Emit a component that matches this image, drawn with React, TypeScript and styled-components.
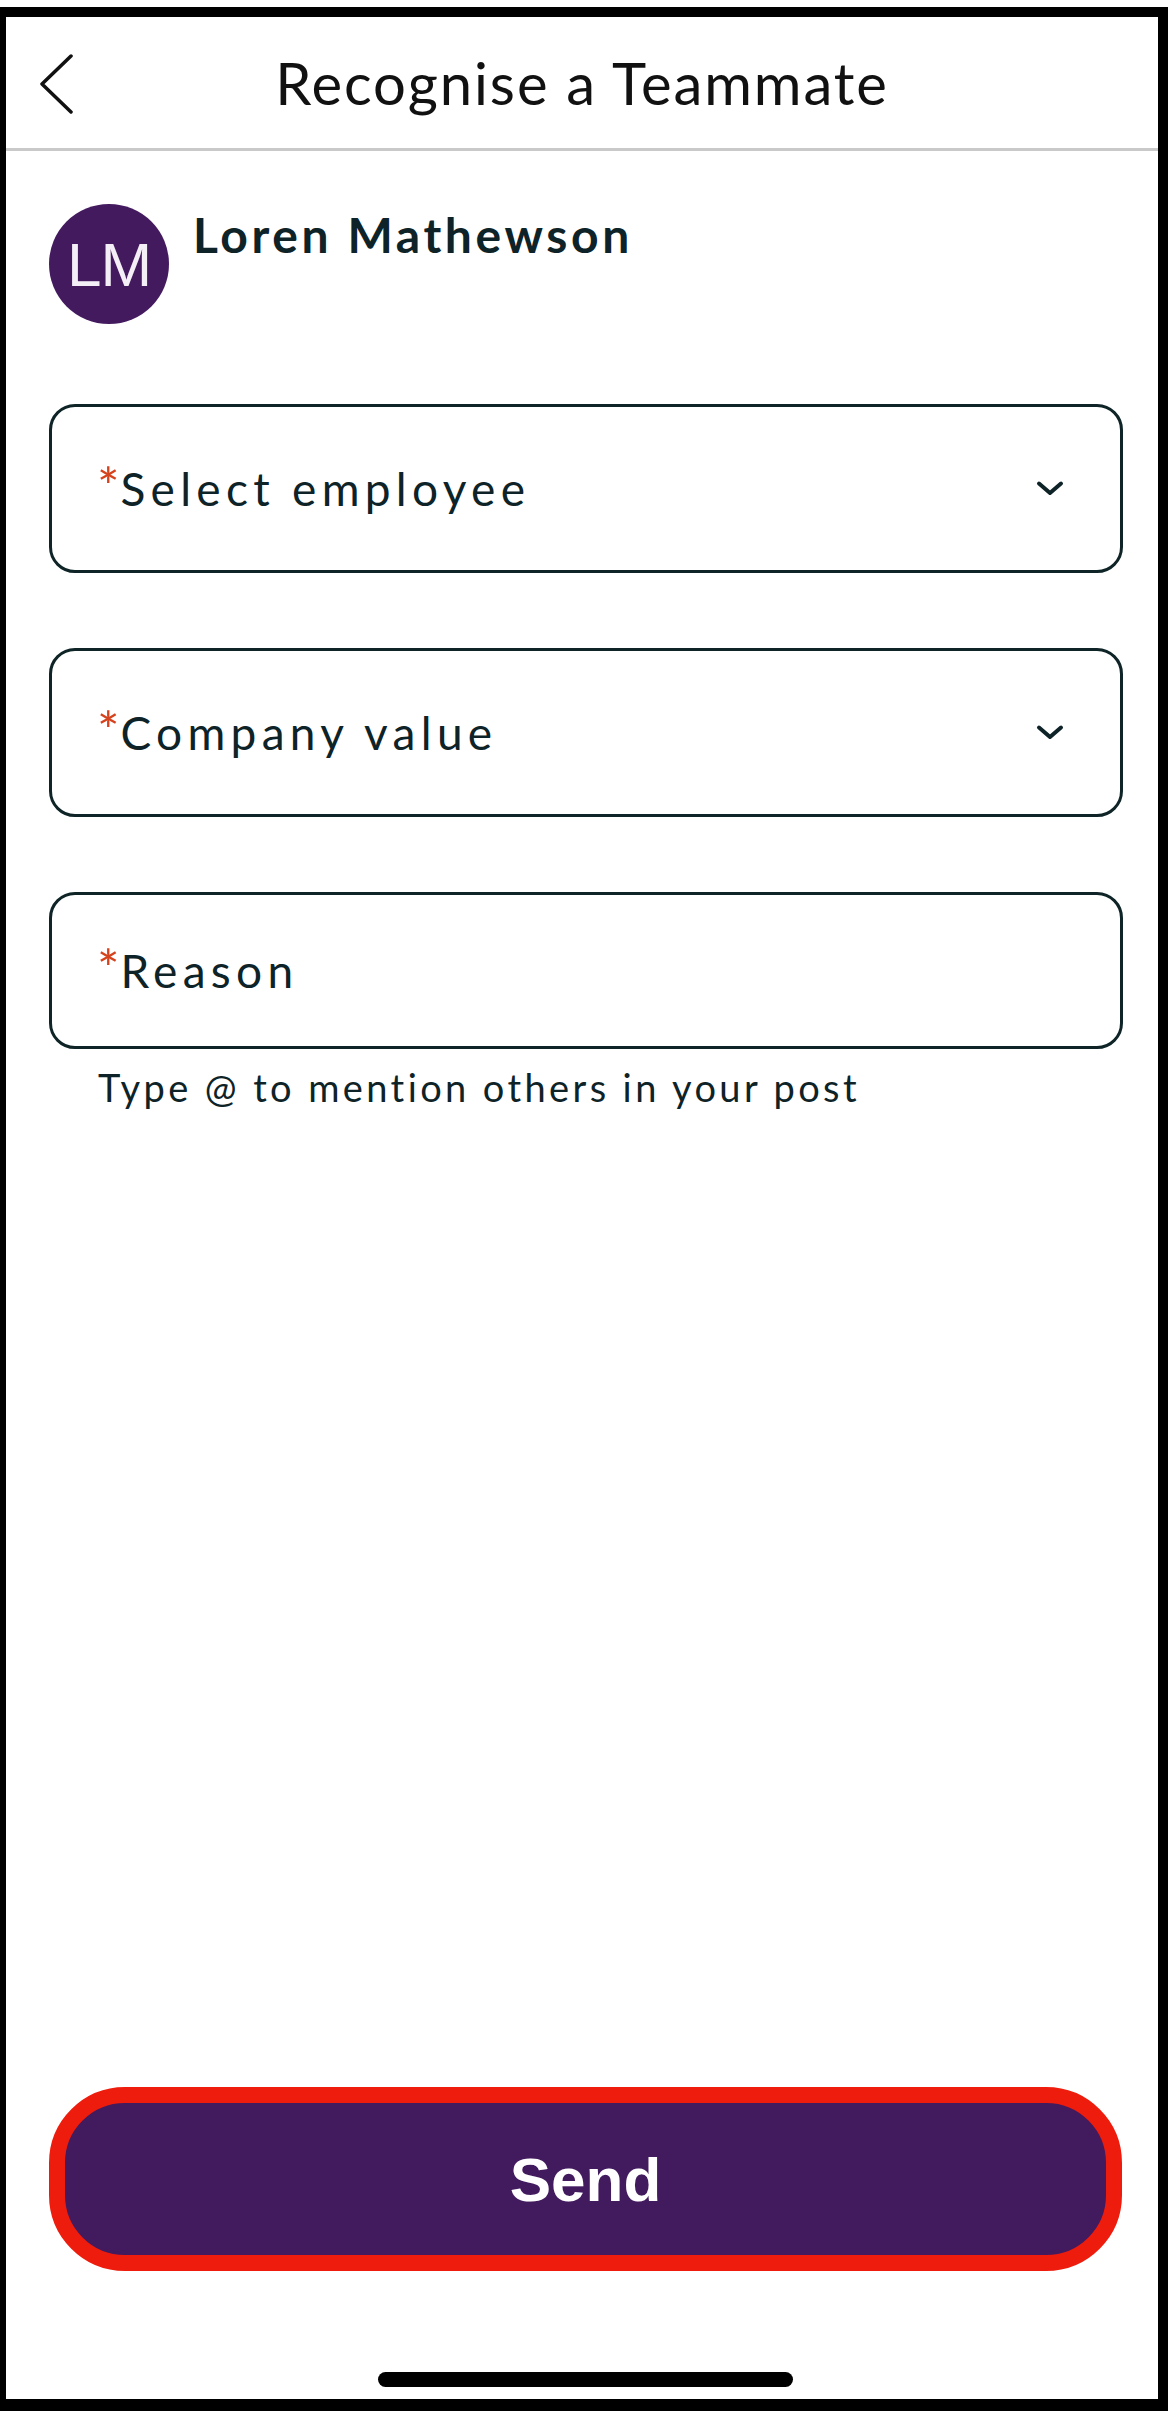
import React from "react";
import styled, { createGlobalStyle } from "styled-components";

const Global = createGlobalStyle`
  html, body { margin: 0; padding: 0; background: #ffffff; }
  * { box-sizing: border-box; }
`;

const Page = styled.div`
  width: 1170px;
  height: 2411px;
  padding-top: 7px;
  background: #ffffff;
`;

const Frame = styled.div`
  width: 1168px;
  height: 2404px;
  border-style: solid;
  border-color: #000000;
  border-width: 10px 10px 12px 6px;
  background: #ffffff;
  display: flex;
  flex-direction: column;
  font-family: Lato, "Noto Sans", sans-serif;
  color: #0e2327;
`;

const Header = styled.header`
  height: 134px;
  flex-shrink: 0;
  border-bottom: 3px solid #c9c9c9;
  display: grid;
  grid-template-columns: 1fr auto 1fr;
  align-items: center;
`;

const BackButton = styled.button`
  justify-self: start;
  margin-left: 30px;
  margin-top: 2px;
  padding: 0;
  border: none;
  background: none;
  display: flex;
`;

const Title = styled.h1`
  margin: 0;
  font-family: Lato, sans-serif;
  font-weight: 400;
  font-size: 58px;
  line-height: 1.2;
  color: #111111;
  letter-spacing: 1.9px;
`;

const Content = styled.main`
  display: flex;
  flex-direction: column;
  padding: 53px 35px 0 43px;
`;

const ProfileRow = styled.div`
  display: flex;
  align-items: flex-start;
  gap: 24px;
`;

const Avatar = styled.div`
  width: 120px;
  height: 120px;
  border-radius: 50%;
  background: #441a5f;
  color: #f4eef6;
  display: flex;
  align-items: center;
  justify-content: center;
  font-family: "Liberation Sans", Arial, sans-serif;
  font-size: 62px;
  font-weight: 400;
  letter-spacing: -1px;
  flex-shrink: 0;
`;

const Name = styled.div`
  font-size: 48px;
  font-weight: 700;
  line-height: 1.2;
  letter-spacing: 3.6px;
  color: #0e2327;
  margin-top: 2px;
`;

const Fields = styled.div`
  margin-top: 80px;
  display: flex;
  flex-direction: column;
  gap: 75px;
`;

const Field = styled.div<{ $height: number }>`
  height: ${(p) => p.$height}px;
  border: 3px solid #0f2427;
  border-radius: 26px;
  display: flex;
  align-items: center;
  justify-content: space-between;
  padding: 0 55px 0 45px;
`;

const Label = styled.span`
  font-size: 46px;
  letter-spacing: 5.3px;
  line-height: 1.2;
  color: #0e2327;
`;

const Required = styled.span`
  color: #d4431d;
  font-size: 1.15em;
  letter-spacing: 1px;
  line-height: 1;
`;

const Helper = styled.p`
  margin: 16px 0 0 49px;
  font-size: 38px;
  line-height: 1.2;
  letter-spacing: 3.4px;
  color: #0e2327;
`;

const Footer = styled.footer`
  margin-top: auto;
  display: flex;
  flex-direction: column;
  padding-bottom: 12px;
`;

const SendButton = styled.button`
  margin: 0 36px 0 43px;
  height: 184px;
  border: 16px solid #ee1c0c;
  border-radius: 76px;
  background: #421a5e;
  color: #ffffff;
  font-family: "Liberation Sans", Arial, sans-serif;
  font-weight: 700;
  font-size: 62px;
  display: flex;
  align-items: center;
  justify-content: center;
`;

const HomeBar = styled.div`
  margin-top: 101px;
  display: flex;
  justify-content: center;
  padding-left: 7px;
`;

const HomeIndicator = styled.div`
  width: 415px;
  height: 15px;
  border-radius: 8px;
  background: #000000;
`;

const ChevronDown = () => (
  <svg width="30" height="17" viewBox="0 0 30 17">
    <polyline
      points="4,3.5 15,13 26,3.5"
      fill="none"
      stroke="#0e2327"
      strokeWidth="4"
      strokeLinecap="round"
      strokeLinejoin="round"
    />
  </svg>
);

const ChevronLeft = () => (
  <svg width="38" height="60" viewBox="0 0 38 60">
    <polyline
      points="35,2 6,30 35,58"
      fill="none"
      stroke="#111111"
      strokeWidth="3.5"
      strokeLinecap="round"
      strokeLinejoin="round"
    />
  </svg>
);

export default function App() {
  return (
    <Page>
      <Global />
      <Frame>
        <Header>
          <BackButton aria-label="Back">
            <ChevronLeft />
          </BackButton>
          <Title>Recognise a Teammate</Title>
          <span />
        </Header>
        <Content>
          <ProfileRow>
            <Avatar>LM</Avatar>
            <Name>Loren Mathewson</Name>
          </ProfileRow>
          <Fields>
            <Field $height={169}>
              <Label>
                <Required>*</Required>Select employee
              </Label>
              <ChevronDown />
            </Field>
            <Field $height={169}>
              <Label>
                <Required>*</Required>Company value
              </Label>
              <ChevronDown />
            </Field>
            <Field $height={157}>
              <Label>
                <Required>*</Required>Reason
              </Label>
            </Field>
          </Fields>
          <Helper>Type @ to mention others in your post</Helper>
        </Content>
        <Footer>
          <SendButton>Send</SendButton>
          <HomeBar>
            <HomeIndicator />
          </HomeBar>
        </Footer>
      </Frame>
    </Page>
  );
}
